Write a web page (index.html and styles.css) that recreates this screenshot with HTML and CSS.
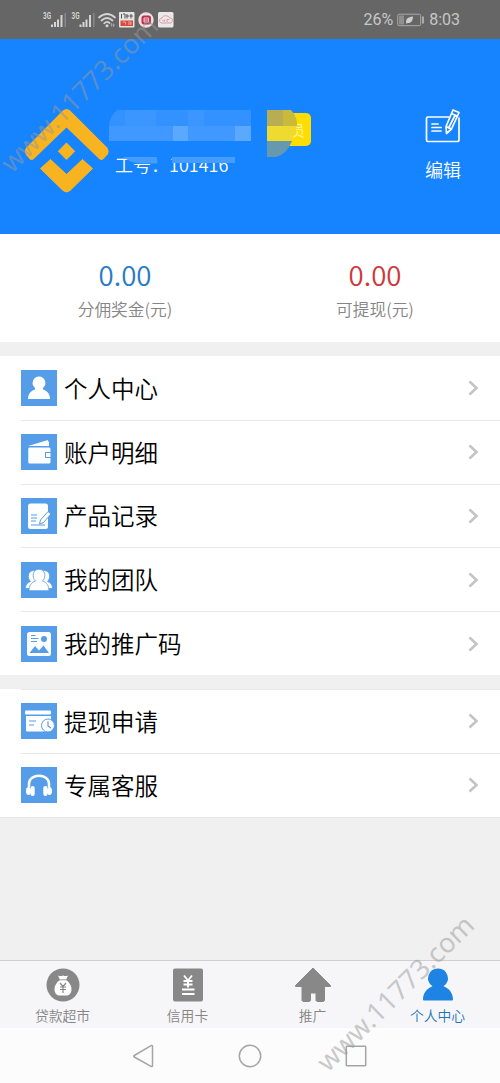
FILE: index.html
```html
<!DOCTYPE html>
<html lang="zh-CN">
<head>
<meta charset="utf-8">
<title>个人中心</title>
<link rel="stylesheet" href="styles.css">
</head>
<body>
<div class="app">
  <div class="status">
    <svg class="status-icons" width="134" height="20" viewBox="0 0 134 20">
      <g fill="#d4d4d4">
        <text class="net" x="0" y="8.500" textLength="8" lengthAdjust="spacingAndGlyphs">3G</text>
        <path d="M8 14.500h2V17H8zM11 12h2v5h-2zM14 9.500h2V17h-2zM17.500 5h2v12h-2z"/>
        <path d="M21.500 3H23v14h-1.500z" fill="#888"/>
        <text class="net" x="28.500" y="8.500" textLength="8" lengthAdjust="spacingAndGlyphs">3G</text>
        <path d="M36.500 14.500h2V17h-2zM39.500 12h2v5h-2zM42.500 9.500h2V17h-2zM46 5h2v12h-2z"/>
        <path d="M50 3h1.500v14H50z" fill="#888"/>
      </g>
      <g fill="none" stroke="#d4d4d4" stroke-width="1.700" stroke-linecap="round">
        <path d="M56 7.500Q64 .5 72 7.500M58.500 10.500Q64 5.500 69.500 10.500M61.200 13.300Q64 10.800 66.500 13"/>
      </g>
      <circle cx="64" cy="15.800" r="1.500" fill="#d4d4d4"/>
      <path d="M68.500 13v3.500M70.500 13.500v3.500M67.500 15h4.500" stroke="#aaa" stroke-width=".8"/>
      <rect x="76" y="2" width="15.500" height="15.500" rx="1" fill="#e6e4e2"/>
      <path d="M78.500 4v4.500M80 4h2v4.500M84 4v4.500M83 6h3M88 4v4.500M86.500 6H90" stroke="#555" fill="none"/>
      <rect x="77.500" y="10.500" width="12.500" height="5.500" fill="#d74b3c"/>
      <path d="M79.500 12h3v2.500M85 12h3v2.500M85 14h3" stroke="#efc0b8" fill="none" stroke-width=".8"/>
      <circle cx="103" cy="10" r="7.700" fill="#eee1e5"/>
      <rect x="98.500" y="5.500" width="9.500" height="9" rx="2.500" fill="#bd304f"/>
      <path d="M101 8h4.500v4H101zM101 10h4" fill="none" stroke="#f2ccd5"/>
      <rect x="115" y="2" width="15.500" height="15.500" rx="1.500" fill="#ece8e9"/>
      <path d="M118 13c-3-2-1-5 1-5 1-3 6-3 8 0 3 0 3 3 1 5zM119 9.500l2 2 1-2M124 12V9.500h2.500" fill="none" stroke="#d99aa8"/>
    </svg>
    <div class="status-right">
      <span>26%</span>
      <svg width="28" height="14" viewBox="0 0 28 14">
        <rect x=".7" y="1.200" width="23" height="11.500" rx="1.500" fill="none" stroke="#aaa"/>
        <path d="M2 2.500h5v9H2z" fill="#8f8f8f"/><path d="M25.200 3.500h1.600v7h-1.600z" fill="#bbb"/>
        <path d="M9.500 11C8 6 11 4 16 3.500c0 4-2 7-5.500 6.500z" fill="#d0d0d0"/>
      </svg>
      <span>8:03</span>
    </div>
  </div>

  <header class="profile">
    <svg class="logo" width="84" height="86" viewBox="0 0 84 86" fill="#f8b420" stroke="#f8b420" stroke-linejoin="round">
      <path stroke-width="6" d="M39.500 4.500Q41.500 2.800 43.500 4.500L80 41Q81 43 80 44.500L76.300 48.300 41.500 14.800 6.700 48.300 3.500 44.500Q2.500 43 3.500 41z" transform="translate(0 .5)"/>
      <path stroke="none" d="M41.500 34.500l8.700 8.700-8.700 8.700-8.700-8.700z"/>
      <path stroke-width="1" d="M25.500 51.500L41.500 66.500 57.500 51.500 67.500 60.500 45 82.500Q41.500 85.500 38 82.500L15.500 60.500z"/>
    </svg>
    <div class="who">
      <div class="name-line"><span class="badge">员</span></div>
      <div class="job">工号：101416</div>
      <svg class="mosaic" width="195" height="60" viewBox="0 0 195 60">
        <path d="M8 0H142V31H0V15Q1 6 8 0z" fill="#3392ff"/>
        <path d="M0 16h142v15H0z" fill="#4199ff"/>
        <path d="M64 16h15v15H64zM126 16h16v15h-16z" fill="#5ba8ff"/>
        <path d="M16 0h31v16H16zM79 0h16v16H79z" fill="#3b97ff"/>
        <path d="M142 0h16v31h-16z" fill="#1683ff"/>
        <path d="M158 0h24q7 8 6 16h-30z" fill="#cab93a"/>
        <path d="M158 0h16v16h-16z" fill="#b8ad52"/>
        <path d="M158 16h30l-5 15h-25z" fill="#efda30"/>
        <path d="M158 31h25q-5 13-16 16h-9z" fill="#6699ad"/>
        <path d="M0 31h158v16H0z" fill="#1683ff"/>
        <path d="M14 47h34v6.500H33Q22 53 14 47zM63 47h63v6H63z" fill="#459dff"/>
      </svg>
    </div>
    <div class="edit">
      <svg width="38" height="38" viewBox="0 0 38 38" fill="none" stroke="#fff" stroke-width="1.700" stroke-linejoin="round" stroke-linecap="round">
        <path d="M25 9H4Q2.500 9 2.500 10.500V32Q2.500 33.500 4 33.500H33Q35 33.500 35 32V10"/>
        <path d="M8 16h6M8 19.500h9M8 23h9"/>
        <path d="M29 2L35 4.500 27.500 21 22.500 25.500 22 18.500zM27.500 5.500l6 2.800M22 18.500l5.500 2.500M31 7.500L24.500 20"/>
      </svg>
      <span>编辑</span>
    </div>
  </header>

  <section class="stats">
    <div class="stat"><b class="num blue">0.00</b><span>分佣奖金(元)</span></div>
    <div class="stat"><b class="num red">0.00</b><span>可提现(元)</span></div>
  </section>

  <nav class="menu">
    <a class="row"><svg class="ico" viewBox="0 0 36 36"><path fill="#fff" d="M18 6.500a6.500 6.500 0 0 1 4 11.500v1.500c4 1 7 4.500 7 9.500H7c0-5 3-8.500 7-9.500V18a6.500 6.500 0 0 1 4-11.500z"/></svg><span class="label">个人中心</span><svg class="chev" viewBox="0 0 12 16"><path d="M1.500 1.500L8.500 8l-7 6.500"/></svg></a>
    <a class="row"><svg class="ico" viewBox="0 0 36 36"><path fill="#fff" d="M7 12L27 6v1.500h1V12zM8.500 13.500H28q1.500 0 1.500 1.500v3H24v6h5.500v4q0 1.500-1.500 1.500H8.500q-1.200 0-1.200-1.500V15q0-1.500 1.200-1.500zM25 19h4.500v4H25z"/></svg><span class="label">账户明细</span><svg class="chev" viewBox="0 0 12 16"><path d="M1.500 1.500L8.500 8l-7 6.500"/></svg></a>
    <a class="row"><svg class="ico" viewBox="0 0 36 36"><rect x="7" y="5.500" width="20" height="25.500" rx="2.500" fill="#fff"/><path d="M10 17h6M10 20h6M10 23h5M10 27h14" stroke="#559de8" stroke-width="1.200"/><path d="M27 13.500l3 2.500-7.500 8.500-4 1.500 1-4z" fill="#fff" stroke="#559de8"/></svg><span class="label">产品记录</span><svg class="chev" viewBox="0 0 12 16"><path d="M1.500 1.500L8.500 8l-7 6.500"/></svg></a>
    <a class="row"><svg class="ico" viewBox="0 0 36 36" fill="#fff" stroke="#559de8" stroke-width=".8"><path d="M12.500 8.500c6-.5 7 6 3.500 10l4 8H4.500c0-4 2-6 5-7C6 16 6.500 9 12.500 8.500zM23.500 8.500c-6-.5-7 6-3.500 10l-4 8h15.500c0-4-2-6-5-7 3.500-3.500 3-10.500-3-11z"/><path d="M18 7.200c6.500 0 7.500 8 3.500 12 4 1 6.500 4.500 6.500 9.500H8c0-5 2.500-8.500 6.500-9.500-4-4-3-12 3.500-12z"/></svg><span class="label">我的团队</span><svg class="chev" viewBox="0 0 12 16"><path d="M1.500 1.500L8.500 8l-7 6.500"/></svg></a>
    <a class="row"><svg class="ico" viewBox="0 0 36 36"><rect x="6" y="6" width="24" height="24" rx="2.500" fill="#fff"/><path d="M10 9.500h4.500M10 12.500h7.500M10 15.500h6" stroke="#559de8" stroke-width="1.200"/><circle cx="23" cy="13" r="3" fill="#559de8"/><path fill="#559de8" d="M8.500 27l5.500-7 4 4.500 4.500-5L28 27z"/></svg><span class="label">我的推广码</span><svg class="chev" viewBox="0 0 12 16"><path d="M1.500 1.500L8.500 8l-7 6.500"/></svg></a>
  </nav>

  <nav class="menu second">
    <a class="row"><svg class="ico" viewBox="0 0 36 36"><rect x="4" y="7.500" width="26" height="4" rx="1" fill="#fff"/><path fill="#fff" d="M5 13h25v15.500H6q-1 0-1-1z"/><path d="M8 18h7M8 22h5" stroke="#559de8" stroke-width="1.200"/><circle cx="27" cy="22.500" r="6.500" fill="#fff" stroke="#559de8"/><path d="M27 18.500v4.500l3 2" fill="none" stroke="#559de8" stroke-width="1.200"/></svg><span class="label">提现申请</span><svg class="chev" viewBox="0 0 12 16"><path d="M1.500 1.500L8.500 8l-7 6.500"/></svg></a>
    <a class="row"><svg class="ico" viewBox="0 0 36 36"><path d="M8 20v-3c0-11 20-11 20 0v3" fill="none" stroke="#fff" stroke-width="2.500"/><g fill="#fff"><ellipse cx="7.500" cy="24" rx="2.500" ry="4"/><ellipse cx="28.500" cy="24" rx="2.500" ry="4"/><rect x="9.500" y="19" width="4.200" height="10" rx="2"/><rect x="22.300" y="19" width="4.200" height="10" rx="2"/></g></svg><span class="label">专属客服</span><svg class="chev" viewBox="0 0 12 16"><path d="M1.500 1.500L8.500 8l-7 6.500"/></svg></a>
  </nav>

  <div class="space"></div>

  <nav class="tabs">
    <a class="tab"><svg viewBox="0 0 36 36"><circle cx="18" cy="18" r="16.500" fill="#888"/><path fill="#fff" d="M13 8.500q2.500 1 5 0 2.500 1 5 0l-2 4.500c3.500 2 5.500 6 5.500 9 0 4-2 6.500-5 6.500h-7c-3 0-5-2.500-5-6.500 0-3 2-7 5.500-9z"/><path d="M14.500 12.800h7" stroke="#888" stroke-width=".8"/><path d="M15 16l3 3.500 3-3.500M15 20h6M15 22.500h6M18 19.500V26" fill="none" stroke="#888" stroke-width="1.200"/></svg><span>贷款超市</span></a>
    <a class="tab"><svg viewBox="0 0 36 36"><rect x="3" y="1.500" width="30" height="33" rx="2" fill="#888"/><path d="M14 8.500l4 5 4-5M13.500 14h9M13.500 17.500h9M18 13v7.500M12 22.500h12.500M12 27h12.500" fill="none" stroke="#fff" stroke-width="1.900"/></svg><span>信用卡</span></a>
    <a class="tab"><svg viewBox="0 0 36 36"><path fill="#888" stroke="#888" stroke-linejoin="round" d="M18 1L35.500 18.500V19.500H29.500V33.500L28.500 34.500H22L21 33.500V26H15.500V33.500L14.500 34.500H8L7 33.500V19.500H.5V18.500z"/></svg><span>推广</span></a>
    <a class="tab active"><svg viewBox="0 0 36 36"><path fill="#1e83e3" d="M18 1.500a9.700 9.700 0 0 1 5.500 17.800C29.500 21.500 33 26.500 33 32.500q0 1-1 1H4q-1 0-1-1c0-6 3.500-11 9.500-13.200A9.700 9.700 0 0 1 18 1.500z"/></svg><span>个人中心</span></a>
  </nav>

  <div class="system">
    <svg viewBox="0 0 24 24"><path d="M20.500 2v20Q20 23 19 22.300L2.300 13Q1.200 12.200 2.300 11.500L19 1.700Q20 1 20.500 2z"/></svg>
    <svg viewBox="0 0 24 24"><circle cx="12" cy="12" r="10.700"/></svg>
    <svg viewBox="0 0 24 24"><rect x="2.300" y="2.300" width="19.400" height="19.400" rx=".6"/></svg>
  </div>

  <svg class="watermark" width="500" height="1083" viewBox="0 0 500 1083">
    <text transform="translate(12 174) rotate(-44.600)" textLength="208">www.11773.com</text>
    <text transform="translate(328 1073) rotate(-44.600)" textLength="208">www.11773.com</text>
  </svg>
</div>
</body>
</html>
```
FILE: styles.css
```css
* { box-sizing: border-box; }
body {
  margin: 0;
  font-family: "Noto Sans CJK SC", sans-serif;
  font-weight: 350;
  background: #f0f0f0;
}
.app {
  position: relative;
  width: 500px;
  height: 1083px;
  display: flex;
  flex-direction: column;
}
.status {
  height: 39px;
  flex: none;
  background: #666;
  display: flex;
  justify-content: space-between;
  align-items: center;
  padding: 0 40px 0 43px;
}
.net { font: bold 8.5px Roboto, sans-serif; }
.status-right {
  display: flex;
  align-items: center;
  gap: 4px;
  color: #c6c6c6;
  font: 16px/20px Roboto, sans-serif;
  padding-top: 1px;
}
.profile {
  height: 195px;
  flex: none;
  background: #1683ff;
  display: flex;
  padding: 68px 38px 0 25px;
}
.logo { flex: none; margin-top: 1px; }
.who {
  position: relative;
  flex: 1;
  padding: 6px 0 0 6px;
}
.name-line {
  display: flex;
  height: 34px;
  width: 196px;
  justify-content: flex-end;
}
.badge {
  width: 50px;
  height: 33px;
  border-radius: 5px;
  background: #fd0;
  color: #fff6a8;
  font-size: 15px;
  line-height: 33px;
  text-align: right;
  padding-right: 6px;
}
.job {
  color: #fff;
  font-size: 18px;
  line-height: 26px;
  margin-top: 4px;
}
.mosaic { position: absolute; left: 0; top: 3px; }
.edit {
  width: 38px;
  display: flex;
  flex-direction: column;
  align-items: center;
  color: #fff;
  font-size: 18px;
  line-height: 26px;
  padding-top: 1px;
  gap: 10px;
}
.edit svg { flex: none; }
.edit span { white-space: nowrap; }
.stats {
  height: 108px;
  flex: none;
  background: #fff;
  display: flex;
  padding-top: 22px;
}
.stat {
  flex: 1;
  display: flex;
  flex-direction: column;
  align-items: center;
  color: #858585;
  font-size: 16.7px;
  line-height: 24px;
}
.num { font-size: 27.6px; font-weight: 350; line-height: 36px; margin-bottom: 5px; }
.blue { color: #267bc5; }
.red { color: #d0373a; }
.menu {
  flex: none;
  margin-top: 14px;
  background: #fff;
}
.row {
  height: 63.8px;
  display: flex;
  align-items: center;
  margin-left: 21px;
  padding-right: 20px;
  border-top: 1px solid #e8e8e8;
}
.menu:not(.second) .row:first-child { border-top-color: transparent; }
.ico { width: 36px; height: 36px; background: #559de8; flex: none; }
.label {
  flex: 1;
  margin-left: 7px;
  font-size: 23.5px;
  line-height: 34px;
  color: #000;
  padding-bottom: 1px;
}
.chev {
  width: 12px;
  height: 16px;
  fill: none;
  stroke: #c4c4c4;
  stroke-width: 2.6;
}
.space { flex: 1; border-top: 1px solid #e6e6e6; }
.tabs {
  height: 68px;
  flex: none;
  display: flex;
  background: #f6f6f9;
  border-top: 1px solid #cfcfd1;
}
.tab {
  flex: 1;
  display: flex;
  flex-direction: column;
  align-items: center;
  padding-top: 6px;
  color: #858585;
  font-size: 13.8px;
  line-height: 20px;
  gap: 2px;
}
.tab svg { width: 36px; height: 36px; }
.tab.active { color: #2276b5; }
.system {
  height: 55px;
  flex: none;
  background: #fcfcfc;
  display: flex;
  justify-content: center;
  gap: 82px;
  padding-top: 16px;
}
.system svg { width: 24px; height: 24px; fill: none; stroke: #a5a5a5; stroke-width: 1.5; }
.watermark { position: absolute; left: 0; top: 0; pointer-events: none; }
.watermark text {
  font: 27px "Noto Sans", sans-serif;
  fill: #999;
  fill-opacity: .5;
}
```
